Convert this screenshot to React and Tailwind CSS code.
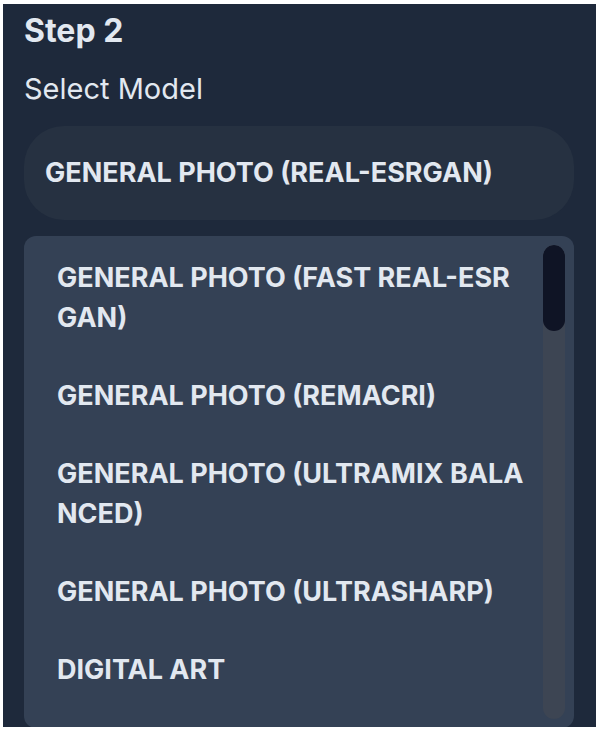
export default function App() {
  const items = [
    "GENERAL PHOTO (FAST REAL-ESRGAN)",
    "GENERAL PHOTO (REMACRI)",
    "GENERAL PHOTO (ULTRAMIX BALANCED)",
    "GENERAL PHOTO (ULTRASHARP)",
    "DIGITAL ART",
  ];
  return (
    <div className="h-[731px] bg-white pt-[4px] pl-[3px] pr-[4px] pb-[4px]" style={{ fontFamily: "Inter, 'Noto Sans', sans-serif" }}>
      <div className="h-full overflow-hidden bg-[#1e293b] pl-[21px] pr-[22px] pt-[7px]">
        <h2 className="text-[32px] leading-[40px] font-bold text-[#e2e8f0]">Step 2</h2>
        <p className="mt-[20px] text-[29px] leading-[36px] text-[#e2e8f0]">Select Model</p>
        <div className="mt-[19px] flex h-[94px] items-center rounded-[40px] bg-[#263141] px-[21px]">
          <span className="text-[27px] font-bold text-[#e2e8f0]">GENERAL PHOTO (REAL-ESRGAN)</span>
        </div>
        <div className="relative mt-[16px] h-[492px] rounded-[12px] bg-[#344155] pl-[33px] pt-[3px]">
          <ul className="flex w-[468px] flex-col">
            {items.map((t) => (
              <li key={t} className="break-all py-[19px] text-[27px] leading-[40px] font-bold text-[#e2e8f0]">
                {t}
              </li>
            ))}
          </ul>
          <div className="absolute right-[9px] top-[9px] bottom-[9px] w-[22px] overflow-hidden rounded-full bg-[#3d4553]">
            <div className="h-[86px] rounded-full bg-[#0f1425]" />
          </div>
        </div>
      </div>
    </div>
  );
}
